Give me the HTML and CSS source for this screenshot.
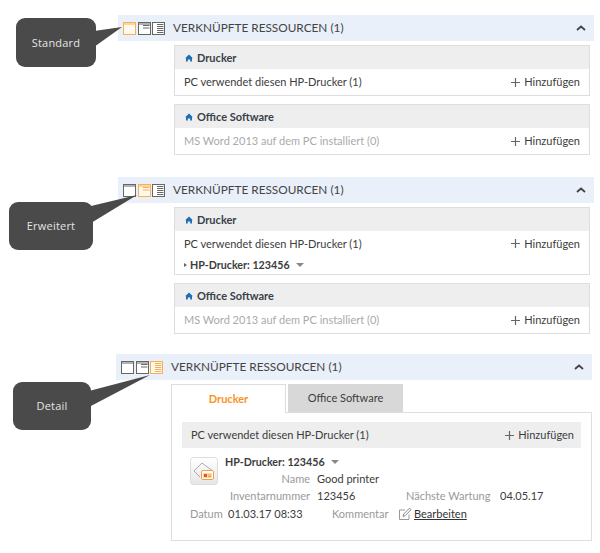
FILE: index.html
```html
<!DOCTYPE html>
<html lang="de">
<head>
<meta charset="utf-8">
<title>Verknüpfte Ressourcen</title>
<link rel="stylesheet" href="styles.css">
</head>
<body>
<svg class="defs" width="0" height="0" aria-hidden="true">
  <symbol id="home" viewBox="0 0 8 8"><path d="M4 .5 7.6 4 7 4.6V7.6H5.2V5.4H2.8V7.6H1V4.6L.4 4Z"/></symbol>
  <symbol id="plus" viewBox="0 0 11 11"><path d="M5.5 1v9M1 5.5h9" fill="none" stroke="#666" stroke-width="1.2"/></symbol>
  <symbol id="up" viewBox="0 0 10 6"><path d="M1 5 5 1.5 9 5" fill="none" stroke="#444" stroke-width="1.8"/></symbol>
</svg>

<section class="block">
  <div class="callout callout-standard">Standard
    <svg class="tail" width="40" height="30" viewBox="0 0 40 30"><path d="M0 5 28 1 0 21Z" fill="#4a4a4a"/></svg>
  </div>
  <header class="bar">
    <span class="views">
      <svg class="view on" viewBox="0 0 13 13"><rect x=".5" y=".5" width="12" height="12"/><path d="M1 2h11"/></svg>
      <svg class="view" viewBox="0 0 13 13"><rect x=".5" y=".5" width="12" height="12"/><path d="M1 2h11M5 3.5h6.5M5 6h6.5"/></svg>
      <svg class="view" viewBox="0 0 13 13"><rect x=".5" y=".5" width="12" height="12"/><path d="M5 2.5h6.5M5 4.5h6.5M5 6.5h6.5M5 8.5h6.5M5 10.5h6.5"/></svg>
    </span>
    <h2 class="bar-title">VERKNÜPFTE RESSOURCEN (1)</h2>
    <svg class="chev" width="10" height="6"><use href="#up"/></svg>
  </header>
  <div class="card">
    <h3 class="card-head"><svg class="home" width="8" height="8"><use href="#home"/></svg>Drucker</h3>
    <div class="row"><span>PC verwendet diesen HP-Drucker (1)</span><span class="add"><svg width="11" height="11"><use href="#plus"/></svg>Hinzufügen</span></div>
  </div>
  <div class="card">
    <h3 class="card-head"><svg class="home" width="8" height="8"><use href="#home"/></svg>Office Software</h3>
    <div class="row"><span class="muted">MS Word 2013 auf dem PC installiert (0)</span><span class="add"><svg width="11" height="11"><use href="#plus"/></svg>Hinzufügen</span></div>
  </div>
</section>

<section class="block block-two">
  <div class="callout callout-erweitert">Erweitert
    <svg class="tail" width="50" height="40" viewBox="0 0 50 40"><path d="M0 11 46 0 0 28Z" fill="#4a4a4a"/></svg>
  </div>
  <header class="bar">
    <span class="views">
      <svg class="view" viewBox="0 0 13 13"><rect x=".5" y=".5" width="12" height="12"/><path d="M1 2h11"/></svg>
      <svg class="view on" viewBox="0 0 13 13"><rect x=".5" y=".5" width="12" height="12"/><path d="M1 2h11M5 3.5h6.5M5 6h6.5"/></svg>
      <svg class="view" viewBox="0 0 13 13"><rect x=".5" y=".5" width="12" height="12"/><path d="M5 2.5h6.5M5 4.5h6.5M5 6.5h6.5M5 8.5h6.5M5 10.5h6.5"/></svg>
    </span>
    <h2 class="bar-title">VERKNÜPFTE RESSOURCEN (1)</h2>
    <svg class="chev" width="10" height="6"><use href="#up"/></svg>
  </header>
  <div class="card">
    <h3 class="card-head"><svg class="home" width="8" height="8"><use href="#home"/></svg>Drucker</h3>
    <div class="row row-tall"><span>PC verwendet diesen HP-Drucker (1)</span><span class="add"><svg width="11" height="11"><use href="#plus"/></svg>Hinzufügen</span></div>
    <div class="sub"><span class="tri-right"></span><b>HP-Drucker: 123456</b><span class="tri-down"></span></div>
  </div>
  <div class="card">
    <h3 class="card-head"><svg class="home" width="8" height="8"><use href="#home"/></svg>Office Software</h3>
    <div class="row"><span class="muted">MS Word 2013 auf dem PC installiert (0)</span><span class="add"><svg width="11" height="11"><use href="#plus"/></svg>Hinzufügen</span></div>
  </div>
</section>

<section class="block block-three">
  <div class="callout callout-detail">Detail
    <svg class="tail" width="70" height="40" viewBox="0 0 70 40"><path d="M0 16 61 0 0 32Z" fill="#4a4a4a"/></svg>
  </div>
  <header class="bar">
    <span class="views">
      <svg class="view" viewBox="0 0 13 13"><rect x=".5" y=".5" width="12" height="12"/><path d="M1 2h11"/></svg>
      <svg class="view" viewBox="0 0 13 13"><rect x=".5" y=".5" width="12" height="12"/><path d="M1 2h11M5 3.5h6.5M5 6h6.5"/></svg>
      <svg class="view on" viewBox="0 0 13 13"><rect x=".5" y=".5" width="12" height="12"/><path d="M5 2.5h6.5M5 4.5h6.5M5 6.5h6.5M5 8.5h6.5M5 10.5h6.5"/></svg>
    </span>
    <h2 class="bar-title">VERKNÜPFTE RESSOURCEN (1)</h2>
    <svg class="chev" width="10" height="6"><use href="#up"/></svg>
  </header>
  <div class="tabs">
    <span class="tab tab-on">Drucker</span>
    <span class="tab">Office Software</span>
  </div>
  <div class="panel">
    <div class="panel-head"><span>PC verwendet diesen HP-Drucker (1)</span><span class="add"><svg width="11" height="11"><use href="#plus"/></svg>Hinzufügen</span></div>
    <div class="detail">
      <div class="thumb">
        <svg width="22" height="22" viewBox="0 0 22 22"><path d="M1 11 9 3 19 10.5" fill="none" stroke="#aaa"/><path d="M1 11 7 17" fill="none" stroke="#aaa"/><rect x="8.5" y="10.5" width="12" height="9" rx="1.5" fill="#fff" stroke="#f0a040"/><rect x="10" y="13" width="9" height="5" fill="#fbd9a8"/><rect x="11" y="14" width="3" height="3" fill="#e0562a"/><path d="M15 15h3M15 16.5h3" stroke="#e8a050"/></svg>
      </div>
      <div class="facts">
        <div class="fact-title"><b>HP-Drucker: 123456</b><span class="tri-down"></span></div>
        <div class="fact"><span class="label label-wide">Name</span><span class="value">Good printer</span></div>
        <div class="fact"><span class="label label-wide">Inventarnummer</span><span class="value value-fixed">123456</span><span class="label label-next">Nächste Wartung</span><span class="value">04.05.17</span></div>
      </div>
    </div>
    <div class="fact fact-last">
      <span class="label label-date">Datum</span><span class="value value-date">01.03.17 08:33</span>
      <span class="label label-comment">Kommentar</span>
      <svg class="pen" width="14" height="14" viewBox="0 0 14 14"><path d="M11 7.5V12.5H1.5V3H7" fill="none" stroke="#999"/><path d="M5 9.5 5.7 7 11.5 1.2 13 2.7 7.2 8.6Z" fill="none" stroke="#888"/></svg>
      <a class="edit" href="#">Bearbeiten</a>
    </div>
  </div>
</section>
</body>
</html>
```
FILE: styles.css
```css
* { box-sizing: border-box; }
html, body { margin: 0; padding: 0; }
body {
  width: 600px;
  height: 553px;
  overflow: hidden;
  background: #fff;
  color: #3c3c3c;
  font: 11px/16px "Lato", "Open Sans", sans-serif;
  padding-top: 15px;
}
.defs { position: absolute; }
h2, h3 { margin: 0; font: inherit; }

.block { position: relative; margin-left: 118px; width: 476px; }
.block-two { margin-top: 22px; }
.block-three { margin-top: 20px; margin-left: 116px; }

.bar {
  display: flex;
  align-items: center;
  height: 26px;
  background: #e9f0f9;
  padding: 0 8px 0 5px;
}
.views { display: flex; gap: 1.5px; width: 50px; }
.view { width: 13px; height: 13px; fill: #fff; stroke: #666; stroke-width: 1; }
.view.on { stroke: #f7b154; fill: #fff8ec; }
.bar-title { flex: 1; font-size: 11.8px; color: #444; }
.chev { display: block; }

.card {
  margin: 4px 4px 0 56px;
  border: 1px solid #dedede;
  margin-bottom: 8px;
}
.card:last-child { margin-bottom: 0; }
.card-head {
  display: flex;
  align-items: center;
  height: 23px;
  padding-left: 10px;
  background: #eee;
  font-weight: 700;
  color: #3a3f48;
}
.home { fill: #1a6fb5; margin-right: 4px; }
.row {
  display: flex;
  justify-content: space-between;
  align-items: center;
  height: 26px;
  padding: 0 9px;
}
.row-tall { height: 25px; }
.sub { display: flex; align-items: center; height: 17px; padding: 0 9px; margin-bottom: 1px; }
.sub b { font-weight: 700; font-size: 10.7px; }
.tri-right {
  width: 0; height: 0; margin-right: 3px;
  border-left: 3px solid #666;
  border-top: 2.5px solid transparent;
  border-bottom: 2.5px solid transparent;
}
.tri-down {
  width: 0; height: 0; margin-left: 6px;
  border-top: 4px solid #888;
  border-left: 4px solid transparent;
  border-right: 4px solid transparent;
}
.muted { color: #aaa; }
.add { display: flex; align-items: center; gap: 3px; }

.tabs { display: flex; gap: 2px; margin: 4px 0 0 55px; height: 29px; position: relative; z-index: 1; }
.tab {
  display: flex;
  align-items: center;
  justify-content: center;
  width: 115px;
  background: #d8d8d8;
  height: 28px;
}
.tab-on {
  width: 115px;
  height: 29px;
  background: #fff;
  border: 1px solid #dedede;
  border-bottom: 0;
  color: #f7941d;
  font-weight: 700;
}
.panel {
  margin: -1px 0 0 55px;
  width: 421px;
  height: 129px;
  border: 1px solid #dedede;
  padding: 9px 10px 0;
}
.panel-head {
  display: flex;
  justify-content: space-between;
  align-items: center;
  height: 26px;
  padding: 0 7px 0 9px;
  background: #eee;
}
.detail { display: flex; gap: 7px; margin: 9px 0 0 8px; }
.thumb {
  display: flex;
  align-items: center;
  justify-content: center;
  width: 28px;
  height: 28px;
  border: 1px solid #ddd;
  border-radius: 3px;
  background: linear-gradient(#fff, #e6e6e6);
}
.facts { display: flex; flex-direction: column; margin-top: -4px; }
.fact-title { display: flex; align-items: center; height: 17px; }
.fact-title b { font-weight: 700; font-size: 10.7px; }
.fact { display: flex; align-items: center; height: 17.5px; }
.fact-last { margin-left: 8px; }
.label { color: #999; }
.label-wide { width: 85px; text-align: right; margin-right: 7px; }
.label-next { width: 94px; }
.label-date { width: 38px; }
.label-comment { width: 66px; }
.value { color: #3c3c3c; }
.value-fixed { width: 89px; }
.value-date { width: 104px; }
.pen { margin: 0 2px 0 0; }
.edit { color: #333; text-decoration: underline; }

.callout {
  position: absolute;
  display: flex;
  align-items: center;
  justify-content: center;
  background: #4a4a4a;
  border-radius: 9px;
  color: #e4e4e4;
  font: 11px/14px "Open Sans", sans-serif;
  letter-spacing: .2px;
  z-index: 2;
}
.tail { position: absolute; display: block; }
.callout-standard { left: -102px; top: 3px; width: 80px; height: 49px; }
.callout-standard .tail { left: 78px; top: 8px; }
.callout-erweitert { left: -109px; top: 25px; width: 84px; height: 48px; }
.callout-erweitert .tail { left: 82px; top: -7px; }
.callout-detail { left: -103px; top: 28px; width: 78px; height: 48px; }
.callout-detail .tail { left: 76px; top: -7px; }
```
